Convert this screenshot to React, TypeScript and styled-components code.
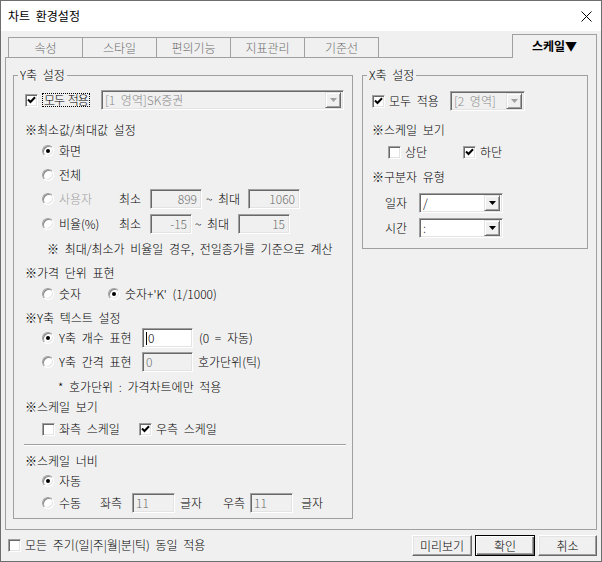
import React from 'react'
import styled, { createGlobalStyle, css } from 'styled-components'

const FONT = `"Noto Sans CJK KR", "Liberation Sans", sans-serif`

const GlobalStyle = createGlobalStyle`
  * { box-sizing: border-box; }
  html, body { margin: 0; padding: 0; background: #f0f0f0; }
  body {
    font-family: ${FONT};
    font-size: 12px;
    font-weight: 300;
    line-height: 14px;
    word-spacing: 3px;
    color: #000;
  }
`

const sunken = css`
  border: 1px solid;
  border-color: #a0a0a0 #fff #fff #a0a0a0;
  box-shadow: inset 1px 1px 0 #696969, inset -1px -1px 0 #e3e3e3;
`

const raised = css`
  border: 1px solid;
  border-color: #e3e3e3 #696969 #696969 #e3e3e3;
  box-shadow: inset 1px 1px 0 #fff, inset -1px -1px 0 #a0a0a0;
`

const Window = styled.div`
  width: 602px;
  height: 562px;
  border: 1px solid #6e6e6e;
  background: #f0f0f0;
  display: flex;
  flex-direction: column;
  overflow: hidden;
`

const TitleBar = styled.div`
  height: 30px;
  flex: none;
  background: #fff;
  display: flex;
  align-items: center;
  justify-content: space-between;
  padding: 0 9px 0 7px;
  font-weight: 400;
`

const Body = styled.div`
  padding: 3px 4px 0 4px;
  display: flex;
  flex-direction: column;
`

const TabStrip = styled.div`
  height: 23px;
  display: flex;
  align-items: flex-end;
  padding-left: 3px;
  position: relative;
  z-index: 1;
`

const Tab = styled.div<{ $active?: boolean }>`
  flex: none;
  display: flex;
  align-items: center;
  justify-content: center;
  background: #f0f0f0;
  border: 1px solid #a0a0a0;
  border-bottom: none;
  width: 75px;
  height: 20px;
  color: #6d6d6d;
  & + & { margin-left: -1px; }
  ${p => p.$active && css`
    margin-left: auto !important;
    width: 85px;
    height: 24px;
    margin-bottom: -1px;
    color: #000;
    font-weight: bold;
    padding-bottom: 2px;
  `}
`

const Panel = styled.div`
  height: 473px;
  border: 1px solid #a0a0a0;
  display: flex;
  align-items: flex-start;
  gap: 9px;
  padding: 10px 0 0 7px;
`

const Group = styled.fieldset<{ $w: number; $h: number }>`
  width: ${p => p.$w}px;
  height: ${p => p.$h}px;
  margin: 0;
  padding: 0;
  min-width: 0;
  border: 1px solid #a0a0a0;
`

const Legend = styled.legend`
  padding: 0 2px;
  margin-left: 4px;
  line-height: 14px;
`

const Row = styled.div<{ $mt: number; $indent: number; $h?: number }>`
  display: flex;
  align-items: center;
  height: ${p => p.$h ?? 20}px;
  margin-top: ${p => p.$mt}px;
  padding-left: ${p => p.$indent}px;
  white-space: nowrap;
`

const Label = styled.span<{ $w?: number; $ml?: number; $muted?: boolean }>`
  flex: none;
  ${p => p.$w !== undefined && `width: ${p.$w}px;`}
  margin-left: ${p => p.$ml ?? 0}px;
  color: ${p => (p.$muted ? '#a0a0a0' : '#000')};
`

const Separator = styled.div`
  margin: 5px 0 0 10px;
  width: 322px;
  height: 2px;
  border-top: 1px solid #a0a0a0;
  border-bottom: 1px solid #fff;
`

const OptionItem = styled.span<{ $w?: number; $gap: number }>`
  flex: none;
  display: inline-flex;
  align-items: center;
  gap: ${p => p.$gap}px;
  ${p => p.$w !== undefined && `width: ${p.$w}px;`}
`

const Box = styled.span`
  flex: none;
  width: 13px;
  height: 13px;
  background: #fff;
  display: flex;
  align-items: center;
  justify-content: center;
  ${sunken}
`

const FocusText = styled.span`
  border: 1px dotted #000;
  padding: 0 1px;
  line-height: 12px;
  word-spacing: 2px;
  letter-spacing: -1px;
`

const RadioDot = styled.span<{ $checked?: boolean }>`
  flex: none;
  position: relative;
  width: 12px;
  height: 12px;
  border-radius: 50%;
  background: #fff;
  border: 1px solid;
  border-color: #a0a0a0 #fff #fff #a0a0a0;
  box-shadow: inset 1px 1px 0 #8a8a8a, inset -1px -1px 0 #e3e3e3;
  &::after {
    content: '';
    display: ${p => (p.$checked ? 'block' : 'none')};
    position: absolute;
    left: 3px;
    top: 3px;
    width: 4px;
    height: 4px;
    border-radius: 50%;
    background: #000;
  }
`

const Edit = styled.div<{ $w: number; $disabled?: boolean; $right?: boolean }>`
  flex: none;
  width: ${p => p.$w}px;
  height: 20px;
  ${sunken}
  background: ${p => (p.$disabled ? '#f0f0f0' : '#fff')};
  color: ${p => (p.$disabled ? '#6d6d6d' : '#000')};
  padding: 0 4px 0 3px;
  line-height: 16px;
  display: flex;
  align-items: center;
  justify-content: ${p => (p.$right ? 'flex-end' : 'flex-start')};
`

const Caret = styled.span`
  width: 1px;
  height: 13px;
  background: #000;
  margin-right: 1px;
`

const ComboBox = styled.div<{ $w: number; $disabled?: boolean }>`
  flex: none;
  width: ${p => p.$w}px;
  height: 20px;
  display: flex;
  align-items: center;
  padding: 0 2px 0 3px;
  ${sunken}
  background: ${p => (p.$disabled ? '#f0f0f0' : '#fff')};
`

const ComboText = styled.span<{ $disabled?: boolean }>`
  flex: 1;
  line-height: 16px;
  white-space: nowrap;
  color: ${p => (p.$disabled ? '#8a8a8a' : '#000')};
`

const ComboButton = styled.span`
  flex: none;
  width: 16px;
  height: 16px;
  display: flex;
  align-items: center;
  justify-content: center;
  background: #f0f0f0;
  ${raised}
`

const Footer = styled.div`
  flex: 1;
  display: flex;
  align-items: center;
  padding: 0 4px 1px 7px;
`

const Buttons = styled.div`
  margin-left: auto;
  display: flex;
  gap: 3px;
`

const Button = styled.button<{ $w: number; $default?: boolean }>`
  width: ${p => p.$w}px;
  height: 21px;
  padding: 0;
  font-family: ${FONT};
  font-size: 12px;
  font-weight: 300;
  color: #000;
  background: #f0f0f0;
  border: 1px solid;
  border-color: #fff #696969 #696969 #fff;
  box-shadow: inset -1px -1px 0 #a0a0a0, inset 1px 1px 0 #e3e3e3;
  ${p => p.$default && css`
    border-color: #000;
    box-shadow: inset 1px 1px 0 #fff, inset -1px -1px 0 #696969, inset -2px -2px 0 #a0a0a0;
  `}
`

function CheckMark() {
  return (
    <svg width="9" height="8" viewBox="0 0 9 8">
      <polyline points="1,3.5 3.5,6 8,1.2" fill="none" stroke="#000" strokeWidth="2" />
    </svg>
  )
}

function Arrow({ disabled }: { disabled?: boolean }) {
  return (
    <svg width="7" height="4" viewBox="0 0 7 4">
      <polygon points="0,0 7,0 3.5,4" fill={disabled ? '#a0a0a0' : '#000'} />
    </svg>
  )
}

function Check({ checked, focus, w, children }: { checked?: boolean; focus?: boolean; w?: number; children: React.ReactNode }) {
  return (
    <OptionItem $w={w} $gap={4}>
      <Box>{checked && <CheckMark />}</Box>
      {focus ? <FocusText>{children}</FocusText> : <Label>{children}</Label>}
    </OptionItem>
  )
}

function Radio({ checked, disabled, w, children }: { checked?: boolean; disabled?: boolean; w?: number; children: React.ReactNode }) {
  return (
    <OptionItem $w={w} $gap={5}>
      <RadioDot $checked={checked} />
      <Label $muted={disabled}>{children}</Label>
    </OptionItem>
  )
}

function Combo({ w, value, disabled }: { w: number; value: string; disabled?: boolean }) {
  return (
    <ComboBox $w={w} $disabled={disabled}>
      <ComboText $disabled={disabled}>{value}</ComboText>
      <ComboButton><Arrow disabled={disabled} /></ComboButton>
    </ComboBox>
  )
}

export default function App() {
  return (
    <>
      <GlobalStyle />
      <Window>
        <TitleBar>
          <span>차트 환경설정</span>
          <svg width="11" height="11" viewBox="0 0 11 11">
            <path d="M0.5 0.5 L10.5 10.5 M10.5 0.5 L0.5 10.5" stroke="#000" strokeWidth="1" />
          </svg>
        </TitleBar>

        <Body>
          <TabStrip>
            <Tab>속성</Tab>
            <Tab>스타일</Tab>
            <Tab>편의기능</Tab>
            <Tab>지표관리</Tab>
            <Tab>기준선</Tab>
            <Tab $active>스케일▼</Tab>
          </TabStrip>

          <Panel>
            <Group $w={340} $h={451}>
              <Legend>Y축 설정</Legend>
              <Row $mt={7} $h={22} $indent={11}>
                <Check checked focus w={76}>모두 적용</Check>
                <Combo w={243} value="[1 영역]SK증권" disabled />
              </Row>
              <Row $mt={9} $indent={11}><Label>※최소값/최대값 설정</Label></Row>
              <Row $mt={1} $indent={28}><Radio checked>화면</Radio></Row>
              <Row $mt={4} $indent={28}><Radio>전체</Radio></Row>
              <Row $mt={4} $indent={28}>
                <Radio disabled w={77}>사용자</Radio>
                <Label $w={31}>최소</Label>
                <Edit $w={52} $disabled $right>899</Edit>
                <Label $w={42} $ml={4}>~ 최대</Label>
                <Edit $w={52} $disabled $right>1060</Edit>
              </Row>
              <Row $mt={5} $indent={28}>
                <Radio w={77}>비율(%)</Radio>
                <Label $w={31}>최소</Label>
                <Edit $w={42} $disabled $right>-15</Edit>
                <Label $w={43} $ml={3}>~ 최대</Label>
                <Edit $w={52} $disabled $right>15</Edit>
              </Row>
              <Row $mt={5} $indent={33}><Label>※ 최대/최소가 비율일 경우, 전일종가를 기준으로 계산</Label></Row>
              <Row $mt={4} $indent={11}><Label>※가격 단위 표현</Label></Row>
              <Row $mt={1} $indent={28}>
                <Radio w={66}>숫자</Radio>
                <Radio checked>숫자+'K' (1/1000)</Radio>
              </Row>
              <Row $mt={4} $indent={11}><Label>※Y축 텍스트 설정</Label></Row>
              <Row $mt={0} $indent={28}>
                <Radio checked w={100}>Y축 개수 표현</Radio>
                <Edit $w={51}><Caret />0</Edit>
                <Label $ml={6}>(0 = 자동)</Label>
              </Row>
              <Row $mt={4} $indent={28}>
                <Radio w={100}>Y축 간격 표현</Radio>
                <Edit $w={51} $disabled>0</Edit>
                <Label $ml={5}>호가단위(틱)</Label>
              </Row>
              <Row $mt={5} $indent={44}><Label>* 호가단위 : 가격차트에만 적용</Label></Row>
              <Row $mt={0} $indent={11}><Label>※스케일 보기</Label></Row>
              <Row $mt={2} $indent={28}>
                <Check w={97}>좌측 스케일</Check>
                <Check checked>우측 스케일</Check>
              </Row>
              <Separator />
              <Row $mt={5} $indent={11}><Label>※스케일 너비</Label></Row>
              <Row $mt={0} $indent={28}><Radio checked>자동</Radio></Row>
              <Row $mt={2} $indent={28}>
                <Radio w={58}>수동</Radio>
                <Label $w={32}>좌측</Label>
                <Edit $w={43} $disabled>11</Edit>
                <Label $w={43} $ml={5}>글자</Label>
                <Label $w={27}>우측</Label>
                <Edit $w={43} $disabled>11</Edit>
                <Label $ml={8}>글자</Label>
              </Row>
            </Group>

            <Group $w={226} $h={181}>
              <Legend>X축 설정</Legend>
              <Row $mt={9} $indent={9}>
                <Check checked w={78}>모두 적용</Check>
                <Combo w={75} value="[2 영역]" disabled />
              </Row>
              <Row $mt={9} $indent={9}><Label>※스케일 보기</Label></Row>
              <Row $mt={2} $indent={25}>
                <Check w={75}>상단</Check>
                <Check checked>하단</Check>
              </Row>
              <Row $mt={5} $indent={9}><Label>※구분자 유형</Label></Row>
              <Row $mt={6} $indent={22}>
                <Label $w={34}>일자</Label>
                <Combo w={84} value="/" />
              </Row>
              <Row $mt={5} $indent={22}>
                <Label $w={34}>시간</Label>
                <Combo w={84} value=":" />
              </Row>
            </Group>
          </Panel>
        </Body>

        <Footer>
          <Check>모든 주기(일|주|월|분|틱) 동일 적용</Check>
          <Buttons>
            <Button $w={60}>미리보기</Button>
            <Button $w={60} $default>확인</Button>
            <Button $w={59}>취소</Button>
          </Buttons>
        </Footer>
      </Window>
    </>
  )
}
